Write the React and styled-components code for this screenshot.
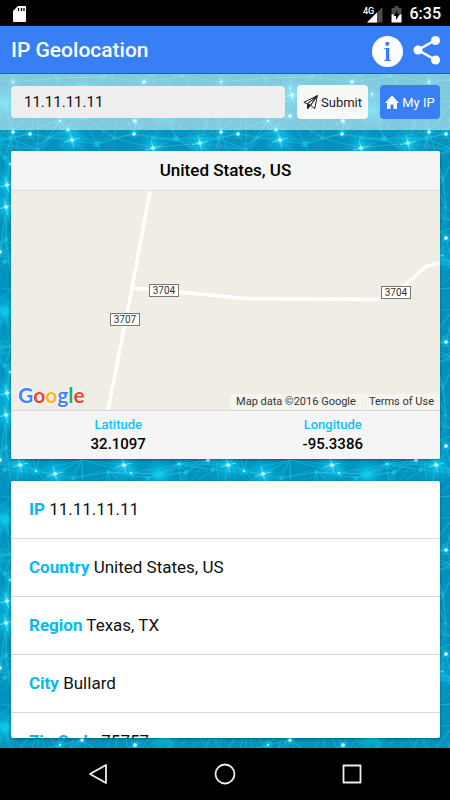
import React, { useState } from 'react';
import styled, { createGlobalStyle, css } from 'styled-components';

const GlobalStyle = createGlobalStyle`
  * {
    box-sizing: border-box;
  }

  body {
    margin: 0;
    background: #000;
    font-family: Roboto, "Liberation Sans", sans-serif;
    color: #000;
  }
`;

const Screen = styled.div`
  display: flex;
  flex-direction: column;
  height: 100vh;
`;

const StatusBar = styled.div`
  display: flex;
  align-items: center;
  justify-content: space-between;
  flex: none;
  height: 26px;
  padding: 2px 9px 0 13px;
  background: #000;
  color: #fff;
`;

const StatusIcons = styled.div`
  display: flex;
  align-items: center;
  gap: 8px;
`;

const Clock = styled.span`
  font-size: 16px;
  line-height: 20px;
  font-weight: 500;
`;

const Header = styled.header`
  display: flex;
  align-items: center;
  justify-content: space-between;
  flex: none;
  height: 48px;
  padding: 0 9px 0 11px;
  border-bottom: 1px solid #0c60ee;
  background: #387ef5;
`;

const Title = styled.h1`
  margin: 0;
  font-size: 21px;
  line-height: 24px;
  font-weight: 500;
  color: #fff;
`;

const HeaderActions = styled.div`
  display: flex;
  align-items: center;
  gap: 10px;
  padding-top: 4px;
`;

const IconButton = styled.button`
  display: flex;
  padding: 0;
  border: none;
  background: none;
  cursor: pointer;
`;

const Content = styled.main`
  position: relative;
  display: flex;
  flex-direction: column;
  flex: 1;
  min-height: 0;
  overflow: hidden;
  background: #0593c1;
`;

const Backdrop = styled.svg`
  position: absolute;
  inset: 0;
  width: 100%;
  height: 100%;
`;

const SearchBar = styled.form`
  position: relative;
  display: flex;
  align-items: center;
  gap: 12px;
  flex: none;
  height: 56px;
  padding: 0 10px 0 11px;
  background: rgba(255, 255, 255, 0.5);
`;

const SearchInput = styled.input`
  flex: 1;
  min-width: 0;
  height: 32px;
  padding: 0 13px;
  border: none;
  border-radius: 4px;
  background: #eee;
  font-family: inherit;
  font-size: 15px;
  color: #111;
`;

const Button = styled.button`
  display: flex;
  align-items: center;
  justify-content: center;
  gap: 3px;
  width: ${props => props.$width};
  height: 34px;
  padding: 0;
  border: none;
  border-radius: 4px;
  background: #f8f8f8;
  font-family: inherit;
  font-size: 13px;
  color: #222;
  cursor: pointer;

  ${props => props.$primary && css`
    background: #387ef5;
    color: #fff;
  `}
`;

const Cards = styled.div`
  position: relative;
  display: flex;
  flex-direction: column;
  gap: 22px;
  flex: 1;
  min-height: 0;
  padding: 21px 10px 10px 11px;
`;

const Card = styled.section`
  flex: none;
  overflow: hidden;
  border-radius: 2px;
  background: #fff;
  box-shadow: 0 1px 3px rgba(0, 0, 0, 0.4);
`;

const CardTitle = styled.h2`
  margin: 0;
  padding: 7px 0 8px;
  border-bottom: 1px solid #dcdce2;
  background: #f5f5f5;
  font-size: 17px;
  line-height: 24px;
  font-weight: 500;
  text-align: center;
`;

const Map = styled.div`
  position: relative;
  height: 219px;
  background: #f0ede5;
`;

const Roads = styled.svg`
  display: block;
  width: 100%;
  height: 100%;
`;

const GoogleLogo = styled.span`
  position: absolute;
  left: 7px;
  bottom: 2px;
  font-family: Lato, sans-serif;
  font-size: 21px;
  line-height: 26px;
  font-weight: 700;
  text-shadow: 0 0 2px #fff, 0 0 2px #fff, 0 0 2px #fff;
`;

const Letter = styled.span`
  color: ${props => props.$color};
`;

const Attribution = styled.div`
  position: absolute;
  right: 0;
  bottom: 0;
  display: flex;
  gap: 1px;
`;

const Credit = styled.span`
  padding: 0 6px;
  background: rgba(247, 246, 242, 0.7);
  font-size: 11px;
  line-height: 16px;
  color: #333;
`;

const TermsLink = styled(Credit)`
  text-decoration: none;
`;

const Coordinates = styled.dl`
  display: grid;
  grid-template-columns: 1fr 1fr;
  margin: 0;
  padding: 4px 0 5px;
  border-top: 1px solid #d8d8d8;
  background: #f5f5f5;
  text-align: center;
`;

const CoordinateLabel = styled.dt`
  font-size: 13px;
  line-height: 19px;
  font-weight: 500;
  color: #11c1f3;
`;

const CoordinateValue = styled.dd`
  margin: 0;
  font-size: 15px;
  line-height: 20px;
  font-weight: 500;
`;

const DetailsCard = styled(Card)`
  flex: 1;
  min-height: 0;
`;

const DetailList = styled.ul`
  margin: 0;
  padding: 0;
  list-style: none;
`;

const DetailItem = styled.li`
  height: 58px;
  padding: 16px 18px;
  border-bottom: 1px solid #d8d8d8;
  font-size: 17px;
  line-height: 24px;
  color: #111;
`;

const DetailLabel = styled.strong`
  font-weight: 700;
  color: #06baf0;
`;

const NavBar = styled.nav`
  display: flex;
  align-items: center;
  justify-content: center;
  gap: 103px;
  flex: none;
  height: 52px;
  background: #000;
`;

const TILE = 208;

// x, y, radius, kind
const NODES = [
  [13, 8, 1, 'spark'], [144, 8, 2, 'spark'], [82, 14, 1, 'spark'], [84, 21, 2, 'star'],
  [164, 20, 1, 'spark'], [5, 29, 3, 'glow'], [82, 42, 2, 'spark'], [163, 37, 3, 'glow'],
  [60, 47, 1, 'spark'], [135, 47, 2, 'spark'], [13, 58, 2, 'spark'], [30, 60, 2, 'spark'],
  [10, 64, 2, 'dot'], [49, 64, 2, 'dot'], [68, 56, 2, 'spark'], [72, 66, 2, 'star'],
  [97, 70, 3, 'dot'], [114, 64, 2, 'dot'], [134, 60, 2, 'spark'], [176, 65, 3, 'dot'],
  [153, 64, 2, 'dot'], [153, 74, 2, 'star'], [200, 69, 2, 'star'], [38, 76, 2, 'dot'],
  [5, 84, 2, 'dot'], [10, 90, 1, 'spark'], [7, 111, 2, 'star'], [6, 133, 2, 'star'],
  [7, 138, 1, 'dot'], [27, 105, 1, 'dot'], [30, 133, 1, 'dot'], [6, 165, 2, 'dot'],
  [0, 178, 2, 'spark'], [5, 188, 2, 'dot'], [30, 164, 2, 'spark'], [20, 183, 2, 'star'],
  [36, 189, 1, 'spark'], [55, 192, 2, 'star'], [82, 178, 1, 'dot'], [124, 183, 2, 'star'],
  [131, 191, 1, 'spark'], [159, 192, 3, 'glow'], [179, 182, 1, 'spark'], [186, 190, 2, 'dot'],
  [148, 196, 2, 'dot'], [73, 196, 2, 'dot'], [108, 190, 2, 'dot'], [46, 150, 2, 'dot'],
  [95, 130, 2, 'star'], [150, 125, 2, 'glow'], [185, 140, 2, 'dot'], [112, 100, 2, 'dot'],
  [38, 27, 2, 'dot'], [118, 27, 2, 'dot'], [190, 28, 2, 'dot'], [57, 4, 1, 'dot'],
  [105, 3, 1, 'dot'], [182, 2, 1, 'dot'],
];

const nearest = (from, to) => {
  const d = to - from;
  return from + d - TILE * Math.round(d / TILE);
};

const buildEdges = () => {
  const edges = [];
  NODES.forEach((a, i) => {
    NODES.forEach((b, j) => {
      if (j <= i) return;
      const x = nearest(a[0], b[0]);
      const y = nearest(a[1], b[1]);
      const length = Math.hypot(x - a[0], y - a[1]);
      if (length < 53 && (i * 7 + j * 3) % 5 < 4) {
        edges.push({ x1: a[0], y1: a[1], x2: x, y2: y, opacity: 0.22 + ((i + j) % 4) * 0.12 });
      }
    });
  });
  return edges;
};

const EDGES = buildEdges();
const OFFSETS = [-TILE, 0, TILE].flatMap(x => [-TILE, 0, TILE].map(y => [x, y]));

function Node({ node: [x, y, r, kind] }) {
  const bright = kind === 'spark' || kind === 'star';
  return (
    <g>
      {kind !== 'dot' && <circle cx={x} cy={y} r={kind === 'spark' ? 6 : 17} fill="url(#halo)" />}
      {kind === 'star' && (
        <path
          d={`M${x - 8} ${y + 2}L${x + 8} ${y - 2}M${x - 2} ${y - 8}L${x + 2} ${y + 8}`}
          stroke="#b8fbff"
          strokeWidth="0.7"
          opacity="0.7"
        />
      )}
      <circle cx={x} cy={y} r={bright ? r * 0.9 : r} fill={bright ? '#e8ffff' : '#08c5dd'} opacity={bright ? 1 : 0.8} />
    </g>
  );
}

function NetworkBackdrop() {
  return (
    <Backdrop aria-hidden="true">
      <defs>
        <radialGradient id="halo">
          <stop offset="0" stopColor="#1ae6ff" stopOpacity="0.9" />
          <stop offset="0.4" stopColor="#0bcbf5" stopOpacity="0.4" />
          <stop offset="1" stopColor="#0bcbf5" stopOpacity="0" />
        </radialGradient>
        <pattern id="network" width={TILE} height={TILE} patternUnits="userSpaceOnUse">
          <rect width={TILE} height={TILE} fill="#0392bf" />
          {OFFSETS.map(([x, y]) => (
            <g key={`${x},${y}`} transform={`translate(${x} ${y})`}>
              {EDGES.map((edge, i) => (
                <line key={i} {...edge} stroke="#35dce8" strokeWidth="0.7" />
              ))}
              {NODES.map((node, i) => <Node key={i} node={node} />)}
            </g>
          ))}
        </pattern>
      </defs>
      <rect width="100%" height="100%" fill="url(#network)" />
    </Backdrop>
  );
}

const SdCardIcon = () => (
  <svg width="13" height="16" viewBox="0 0 13 16" aria-hidden="true">
    <path d="M5 0h7a1 1 0 0 1 1 1v14a1 1 0 0 1-1 1H1a1 1 0 0 1-1-1V5z" fill="#fff" />
    <path d="M5.500 2v3M8.500 2v3M11 2v3" stroke="#000" strokeWidth="1.300" />
  </svg>
);

const SignalIcon = () => (
  <svg width="20" height="17" viewBox="0 0 20 17" aria-hidden="true">
    <path d="M19.500 1v15.500H4z" fill="#4d4d4d" />
    <path d="M14 6.500v10H4z" fill="#fff" />
    <text x="0" y="8" fill="#fff" stroke="#000" strokeWidth="1" paintOrder="stroke" fontSize="9" fontWeight="500">4G</text>
  </svg>
);

const BatteryIcon = () => (
  <svg width="11" height="17" viewBox="0 0 11 17" aria-hidden="true">
    <path d="M3.500 0h4v2H10a.5.5 0 0 1 .5.500V9H.5V2.500A.5.500 0 0 1 1 2h2.500z" fill="#4d4d4d" />
    <path d="M.5 8.500h10V16a.5.500 0 0 1-.5.500H1a.5.500 0 0 1-.5-.5z" fill="#fff" />
    <path d="M6.500 4 2.500 10h2.500v4l4-6H6.500z" fill="#000" />
  </svg>
);

const InfoIcon = () => (
  <svg width="31" height="31" viewBox="0 0 31 31" aria-hidden="true">
    <circle cx="15.500" cy="15.500" r="15.500" fill="#fff" />
    <circle cx="15.300" cy="7.800" r="2.100" fill="#387ef5" />
    <path d="M12.300 12h5v11.700l1.700.4v.9h-6.700v-.9l1.700-.4V13.300l-1.700-.4z" fill="#387ef5" />
  </svg>
);

const ShareIcon = () => (
  <svg width="28" height="31" viewBox="0 0 28 31" aria-hidden="true">
    <path d="M22.500 4 5 14l17.500 10" fill="none" stroke="#fff" strokeWidth="2.500" />
    <circle cx="22.500" cy="4.500" r="4.500" fill="#fff" />
    <circle cx="5" cy="14" r="4.500" fill="#fff" />
    <circle cx="22.500" cy="24" r="4.500" fill="#fff" />
  </svg>
);

const PaperPlaneIcon = () => (
  <svg width="15" height="15" viewBox="0 0 15 15" fill="none" stroke="#222" strokeLinejoin="round" aria-hidden="true">
    <path d="M14.300.7.800 7.300l3.700 1.500L14.300.7 7.500 10.300l4.200 3.400z" />
    <path d="M4.500 8.800v5l3-3.500L14.300.700z" />
    <path d="M4.500 13.800V9l3 1.300z" fill="#222" />
  </svg>
);

const HomeIcon = () => (
  <svg width="14" height="14" viewBox="0 0 14 14" aria-hidden="true">
    <path d="M7 .5 0 8h2v6h3.500V9.500h3V14H12V8h2z" fill="#fff" />
  </svg>
);

function RoadSign({ x, y, number }) {
  return (
    <g>
      <rect x={x} y={y} width="29" height="12" fill="#fff" stroke="#777" />
      <text x={x + 14.5} y={y + 9.5} fontSize="10" textAnchor="middle" fill="#333">{number}</text>
    </g>
  );
}

const LOGO = [
  ['G', '#4285f4'],
  ['o', '#ea4335'],
  ['o', '#fbbc05'],
  ['g', '#4285f4'],
  ['l', '#34a853'],
  ['e', '#ea4335'],
];

function LocationMap() {
  return (
    <Map>
      <Roads viewBox="0 0 429 219" preserveAspectRatio="xMidYMid slice" role="img" aria-label="Map">
        <g fill="none" stroke="#fff" strokeWidth="3.500" strokeLinejoin="round">
          <path d="M139 0 121 97 97 219" />
          <path d="M121 97 153 99.500 214 105.500 233 107.500 369 108.500 385 102 415 75.500 429 71.500" />
        </g>
        <RoadSign x={138.5} y={93.5} number="3704" />
        <RoadSign x={370.5} y={95.5} number="3704" />
        <RoadSign x={99.5} y={122.5} number="3707" />
      </Roads>
      <GoogleLogo>
        {LOGO.map(([letter, color], i) => <Letter key={i} $color={color}>{letter}</Letter>)}
      </GoogleLogo>
      <Attribution>
        <Credit>Map data ©2016 Google</Credit>
        <TermsLink as="a" href="#terms">Terms of Use</TermsLink>
      </Attribution>
    </Map>
  );
}

const DETAILS = [
  { label: 'IP', value: '11.11.11.11' },
  { label: 'Country', value: 'United States, US' },
  { label: 'Region', value: 'Texas, TX' },
  { label: 'City', value: 'Bullard' },
  { label: 'Zip Code', value: '75757' },
];

function App() {
  const [ip, setIp] = useState('11.11.11.11');

  return (
    <>
      <GlobalStyle />
      <Screen>
        <StatusBar>
          <SdCardIcon />
          <StatusIcons>
            <SignalIcon />
            <BatteryIcon />
            <Clock>6:35</Clock>
          </StatusIcons>
        </StatusBar>
        <Header>
          <Title>IP Geolocation</Title>
          <HeaderActions>
            <IconButton aria-label="Info"><InfoIcon /></IconButton>
            <IconButton aria-label="Share"><ShareIcon /></IconButton>
          </HeaderActions>
        </Header>
        <Content>
          <NetworkBackdrop />
          <SearchBar onSubmit={(e) => e.preventDefault()}>
            <SearchInput
              type="text"
              aria-label="IP address"
              value={ip}
              onChange={(e) => setIp(e.target.value)}
            />
            <Button type="submit" $width="71px"><PaperPlaneIcon />Submit</Button>
            <Button type="button" $width="60px" $primary onClick={() => setIp('11.11.11.11')}>
              <HomeIcon />My IP
            </Button>
          </SearchBar>
          <Cards>
            <Card>
              <CardTitle>United States, US</CardTitle>
              <LocationMap />
              <Coordinates>
                <div>
                  <CoordinateLabel>Latitude</CoordinateLabel>
                  <CoordinateValue>32.1097</CoordinateValue>
                </div>
                <div>
                  <CoordinateLabel>Longitude</CoordinateLabel>
                  <CoordinateValue>-95.3386</CoordinateValue>
                </div>
              </Coordinates>
            </Card>
            <DetailsCard>
              <DetailList>
                {DETAILS.map(({ label, value }) => (
                  <DetailItem key={label}>
                    <DetailLabel>{label}</DetailLabel> {value}
                  </DetailItem>
                ))}
              </DetailList>
            </DetailsCard>
          </Cards>
        </Content>
        <NavBar>
          <IconButton aria-label="Back">
            <svg width="24" height="24" viewBox="0 0 24 24" fill="none" stroke="#eee" strokeWidth="1.800" strokeLinejoin="round">
              <path d="M20 3v18L4 12z" />
            </svg>
          </IconButton>
          <IconButton aria-label="Home">
            <svg width="24" height="24" viewBox="0 0 24 24" fill="none" stroke="#eee" strokeWidth="1.800">
              <circle cx="12" cy="12" r="9.500" />
            </svg>
          </IconButton>
          <IconButton aria-label="Recent apps">
            <svg width="24" height="24" viewBox="0 0 24 24" fill="none" stroke="#eee" strokeWidth="1.800" strokeLinejoin="round">
              <path d="M3.500 3.500h17v17h-17z" />
            </svg>
          </IconButton>
        </NavBar>
      </Screen>
    </>
  );
}

export default App;
